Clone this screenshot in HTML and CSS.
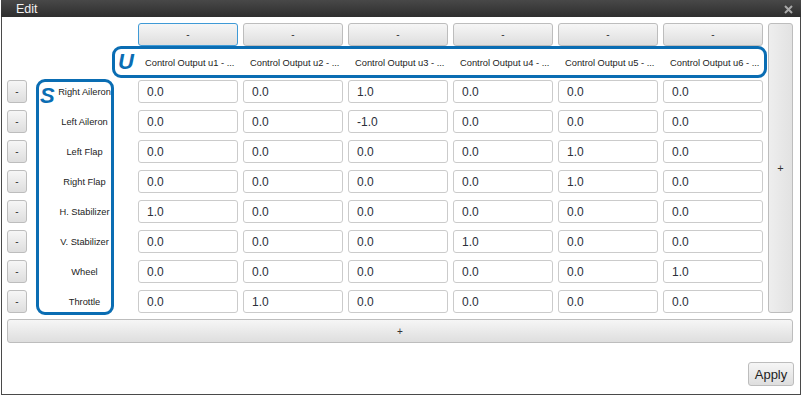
FILE: index.html
```html
<!DOCTYPE html>
<html>
<head>
    <meta charset="UTF-8">
    <title>Edit</title>
    <link rel="stylesheet" href="styles.css">
</head>
<body>
    <div class="window">
        <div class="titlebar">
            <span class="title">Edit</span>
            <svg class="close" width="9" height="9" viewBox="0 0 9 9">
                <path d="M1 1 L8 8 M8 1 L1 8" stroke="#a9a9a9" stroke-width="2" />
            </svg>
        </div>

        <div class="content">
            <div class="matrix">
                <div class="corner"></div>

                <!-- column remove buttons -->
                <button class="btn col-btn focused">-</button>
                <button class="btn col-btn">-</button>
                <button class="btn col-btn">-</button>
                <button class="btn col-btn">-</button>
                <button class="btn col-btn">-</button>
                <button class="btn col-btn">-</button>
                <button class="btn add-col">+</button>

                <!-- column titles -->
                <div class="col-title">Control Output u1 - ...</div>
                <div class="col-title">Control Output u2 - ...</div>
                <div class="col-title">Control Output u3 - ...</div>
                <div class="col-title">Control Output u4 - ...</div>
                <div class="col-title">Control Output u5 - ...</div>
                <div class="col-title">Control Output u6 - ...</div>

                <!-- rows -->
                <button class="btn row-btn">-</button>
                <div class="row-label">Right Aileron</div>
                <div class="cell">0.0</div><div class="cell">0.0</div><div class="cell">1.0</div>
                <div class="cell">0.0</div><div class="cell">0.0</div><div class="cell">0.0</div>

                <button class="btn row-btn">-</button>
                <div class="row-label">Left Aileron</div>
                <div class="cell">0.0</div><div class="cell">0.0</div><div class="cell">-1.0</div>
                <div class="cell">0.0</div><div class="cell">0.0</div><div class="cell">0.0</div>

                <button class="btn row-btn">-</button>
                <div class="row-label">Left Flap</div>
                <div class="cell">0.0</div><div class="cell">0.0</div><div class="cell">0.0</div>
                <div class="cell">0.0</div><div class="cell">1.0</div><div class="cell">0.0</div>

                <button class="btn row-btn">-</button>
                <div class="row-label">Right Flap</div>
                <div class="cell">0.0</div><div class="cell">0.0</div><div class="cell">0.0</div>
                <div class="cell">0.0</div><div class="cell">1.0</div><div class="cell">0.0</div>

                <button class="btn row-btn">-</button>
                <div class="row-label">H. Stabilizer</div>
                <div class="cell">1.0</div><div class="cell">0.0</div><div class="cell">0.0</div>
                <div class="cell">0.0</div><div class="cell">0.0</div><div class="cell">0.0</div>

                <button class="btn row-btn">-</button>
                <div class="row-label">V. Stabilizer</div>
                <div class="cell">0.0</div><div class="cell">0.0</div><div class="cell">0.0</div>
                <div class="cell">1.0</div><div class="cell">0.0</div><div class="cell">0.0</div>

                <button class="btn row-btn">-</button>
                <div class="row-label">Wheel</div>
                <div class="cell">0.0</div><div class="cell">0.0</div><div class="cell">0.0</div>
                <div class="cell">0.0</div><div class="cell">0.0</div><div class="cell">1.0</div>

                <button class="btn row-btn">-</button>
                <div class="row-label">Throttle</div>
                <div class="cell">0.0</div><div class="cell">1.0</div><div class="cell">0.0</div>
                <div class="cell">0.0</div><div class="cell">0.0</div><div class="cell">0.0</div>
            </div>

            <button class="btn add-row">+</button>

            <div class="footer">
                <button class="btn apply">Apply</button>
            </div>
        </div>

        <!-- annotation boxes -->
        <div class="mark mark-u"><span class="mark-letter">U</span></div>
        <div class="mark mark-s"><span class="mark-letter">S</span></div>
    </div>
</body>
</html>
```

FILE: styles.css
```css
body {
    margin: 0;
    background-color: #ffffff;
    font-family: "Liberation Sans", Arial, sans-serif;
}

.window {
    position: relative;
    width: 798px;
    height: 394px;
    margin-left: 1px;
    border: 1px solid #4a4a4a;
    border-top: none;
    background-color: #ffffff;
}

.titlebar {
    height: 17px;
    margin-left: -1px;
    margin-right: -1px;
    background: linear-gradient(#484848, #2e2e2e);
    display: flex;
    align-items: center;
    justify-content: space-between;
    padding: 0 8px 0 15px;
}

.title {
    color: #f2f2f2;
    font-size: 12.5px;
}

.close {
    margin-top: 1px;
}

.content {
    padding: 6px 6px 0 5px;
}

.matrix {
    display: grid;
    grid-template-columns: 20px 101px repeat(6, 100px) 25px;
    grid-template-rows: 23px 20px repeat(8, 23px);
    column-gap: 5px;
    row-gap: 7px;
}

.corner {
    grid-column: 1 / 3;
    grid-row: 1 / 3;
}

.btn {
    font-family: "Liberation Sans", Arial, sans-serif;
    background: linear-gradient(#f6f6f6, #dedede);
    border: 1px solid #bdbdbd;
    border-radius: 3px;
    color: #333;
    font-size: 10px;
    padding: 0;
    margin: 0;
}

.col-btn.focused {
    border-color: #3f9ad6;
}

.add-col {
    grid-column: 9;
    grid-row: 1 / 11;
    font-size: 11px;
    background: linear-gradient(90deg, #eeeeee, #e2e2e2);
}

.col-title {
    font-size: 9.3px;
    color: #222;
    padding-left: 7px;
    display: flex;
    align-items: center;
    white-space: nowrap;
}

.row-btn {
    font-size: 10px;
}

.row-label {
    font-size: 9.3px;
    color: #222;
    text-align: center;
    display: flex;
    align-items: center;
    justify-content: center;
    padding-left: 4px;
}

.cell {
    border: 1px solid #cbcbcb;
    border-radius: 3px;
    font-size: 12px;
    color: #2b2f3a;
    padding-left: 8px;
    display: flex;
    align-items: center;
}

.add-row {
    display: block;
    width: 786px;
    height: 24px;
    margin-top: 6px;
}

.footer {
    display: flex;
    justify-content: flex-end;
    padding-top: 19px;
}

.apply {
    width: 46px;
    height: 24px;
    font-size: 13px;
    color: #222;
}

/* annotation overlays */
.mark {
    position: absolute;
    border: 3px solid #0a6db3;
    border-radius: 9px;
    box-sizing: border-box;
}

.mark-u {
    left: 110px;
    top: 46px;
    width: 655px;
    height: 32px;
}

.mark-s {
    left: 34px;
    top: 79px;
    width: 78px;
    height: 236px;
}

.mark-letter {
    position: absolute;
    color: #0a6db3;
    font-family: "Liberation Sans", Arial, sans-serif;
    font-weight: bold;
    font-style: italic;
    font-size: 22px;
}

.mark-u .mark-letter {
    left: 3px;
    top: 0px;
}

.mark-s .mark-letter {
    left: 1px;
    top: 1px;
}
```
